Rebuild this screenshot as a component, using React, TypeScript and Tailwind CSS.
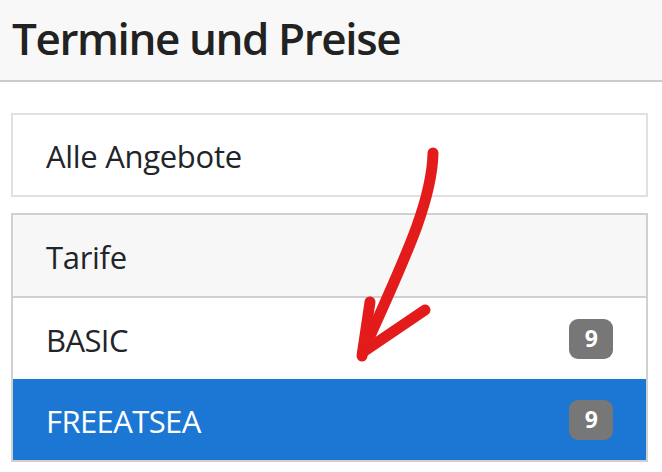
const font = { fontFamily: '"Open Sans", "Noto Sans", sans-serif' };

type Tariff = { name: string; count: number; active?: boolean };

const tariffs: Tariff[] = [
  { name: "BASIC", count: 9 },
  { name: "FREEATSEA", count: 9, active: true },
];

function Badge({ value }: { value: number }) {
  return (
    <span className="flex h-[40px] w-[44px] items-center justify-center rounded-[9px] bg-[#777777] text-[23px] font-bold text-white">
      {value}
    </span>
  );
}

export default function App() {
  return (
    <div className="relative min-h-[472px] bg-white text-[#212529]" style={font}>
      <header className="flex h-[82px] items-center border-b-2 border-[#cbcbcb] bg-[#f8f8f8] px-[12px] pb-[4px]">
        <h1 className="text-[44px] font-semibold tracking-[-1.4px] text-[#222]">Termine und Preise</h1>
      </header>

      <main className="w-[637px] pl-[11px] pt-[31px] box-content">
        <div className="flex h-[84px] items-center border-2 border-[#e0e0e0] pl-[33px] pt-[3px] text-[31px] tracking-[-0.3px]">
          Alle Angebote
        </div>

        <div className="mt-[16px] border-2 border-[#d0d0d0]">
          <div className="flex h-[83px] items-center border-b-2 border-[#d0d0d0] bg-[#f7f7f7] pl-[33px] pt-[3px] text-[31px] tracking-[-0.3px]">
            Tarife
          </div>
          {tariffs.map((t) => (
            <div
              key={t.name}
              className={`flex h-[81px] items-center justify-between pl-[33px] pr-[33px] text-[31px] tracking-[-0.6px] ${t.active ? "bg-[#1b77d3] text-white" : "bg-white"}`}
            >
              <span className="pt-[3px]">{t.name}</span>
              <Badge value={t.count} />
            </div>
          ))}
        </div>
      </main>

      <svg
        className="pointer-events-none absolute left-0 top-0"
        width="662"
        height="472"
        viewBox="0 0 662 472"
        fill="none"
        stroke="#e31b1b"
        strokeWidth="11"
        strokeLinecap="round"
        strokeLinejoin="round"
      >
        <path d="M433 153 C432 205 400 268 363 352" />
        <path d="M370 302 L362 356" />
        <path d="M363 352 L425 310" />
      </svg>
    </div>
  );
}
